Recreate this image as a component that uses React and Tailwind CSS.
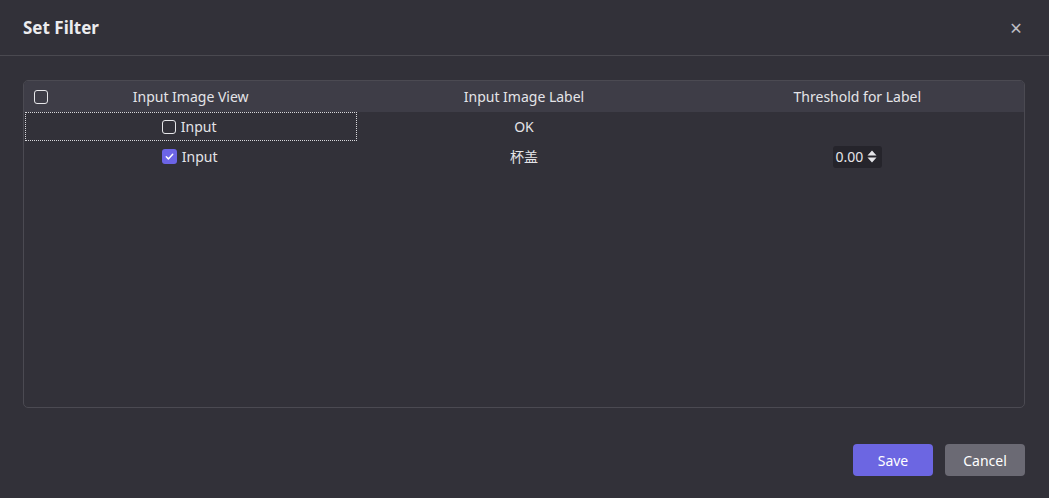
import React from 'react';

const rows = [
  { id: 1, checked: false, label: 'OK', threshold: null, focused: true },
  { id: 2, checked: true, label: '杯盖', threshold: '0.00', focused: false },
];

const Box = ({ checked }) =>
  checked ? (
    <span className="w-[15px] h-[15px] rounded-[3px] bg-[#6c64e6] flex items-center justify-center">
      <svg width="11" height="11" viewBox="0 0 12 12" fill="none">
        <path d="M2.5 6.3l2.3 2.3 4.7-5" stroke="white" strokeWidth="1.6" strokeLinecap="round" strokeLinejoin="round" />
      </svg>
    </span>
  ) : (
    <span className="w-[14px] h-[14px] rounded-[3px] border border-[#e6e6e9]" />
  );

export default function App() {
  return (
    <div
      className="w-[1049px] h-[498px] bg-[#323139] text-[#e4e4e8] flex flex-col"
      style={{ fontFamily: '"Noto Sans", "Noto Sans CJK SC", sans-serif' }}
    >
      <div className="h-[56px] flex items-center justify-between pl-[23px] pr-[27px] pt-[1px] border-b border-[#4a4950]">
        <h2 className="text-[17px] font-bold text-[#ececef]">Set Filter</h2>
        <span className="text-[21px] text-[#bdbdc3] leading-none">×</span>
      </div>

      <div className="pl-[23px] pr-[24px] pt-[24px]">
        <div className="h-[328px] rounded-[5px] border border-[#4b4a52] overflow-hidden text-[14px]">
          <div className="h-[31px] bg-[#3e3d47] grid grid-cols-3 items-center">
            <div className="relative flex items-center justify-center">
              <span className="absolute left-[10px] top-1/2 -translate-y-1/2 w-[14px] h-[14px] rounded-[3px] border border-[#e6e6e9]" />
              Input Image View
            </div>
            <div className="text-center">Input Image Label</div>
            <div className="text-center">Threshold for Label</div>
          </div>
          {rows.map((r) => (
            <div key={r.id} className={(r.focused ? 'h-[29px]' : 'h-[31px]') + ' grid grid-cols-3 items-center'}>
              <div
                className={
                  'h-full flex items-center justify-center gap-[5px] ml-px ' +
                  (r.focused ? 'border border-dotted border-[#d8d8dc] pr-[4px]' : 'pr-[3px]')
                }
              >
                <Box checked={r.checked} />
                <span>Input</span>
              </div>
              <div className="text-center">{r.label}</div>
              <div className="flex justify-center">
                {r.threshold && (
                  <span className="h-[22px] pl-[2px] pr-[5px] bg-[#25242b] rounded-[3px] flex items-center gap-[4px] ml-[1px]">
                    {r.threshold}
                    <svg width="10" height="13" viewBox="0 0 10 13">
                      <path d="M5 0.5L9.5 5.5H0.5z M5 12.5L0.5 7.5H9.5z" fill="#e4e4e8" />
                    </svg>
                  </span>
                )}
              </div>
            </div>
          ))}
        </div>
      </div>

      <div className="flex justify-end gap-[12px] px-[24px] pt-[36px]">
        <button className="w-[80px] h-[32px] rounded-[4px] bg-[#6c66e2] text-white text-[14px]">Save</button>
        <button className="w-[80px] h-[32px] rounded-[4px] bg-[#6b6a74] text-white text-[14px]">Cancel</button>
      </div>
    </div>
  );
}
